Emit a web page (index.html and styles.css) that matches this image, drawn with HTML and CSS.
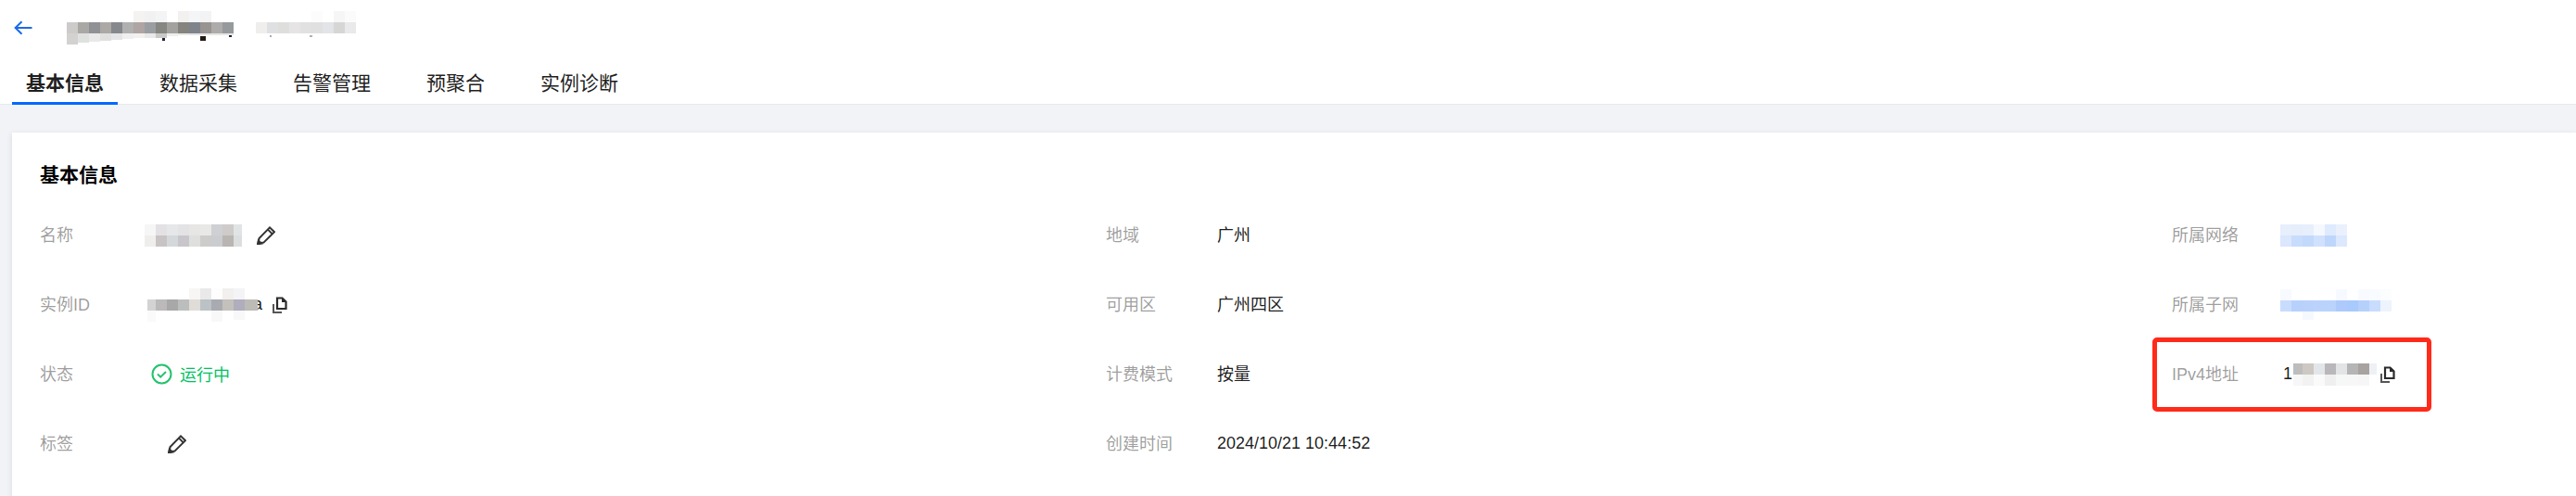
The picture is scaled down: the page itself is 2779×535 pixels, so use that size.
FILE: index.html
```html
<!DOCTYPE html>
<html lang="zh-CN">
<head>
<meta charset="utf-8">
<title>基本信息</title>
<link rel="stylesheet" href="styles.css">
</head>
<body>
<div class="page">
  <header class="head">
    <div class="titlebar">
      <svg class="back" width="20" height="16" viewBox="0 0 20 16" fill="none" stroke="#1a6ae8" stroke-width="2"><path d="M19.5 8H2M8.5 1.2 1.6 8l6.9 6.8"/></svg>
      <svg class="mosaic title-a" width="180" height="36" shape-rendering="crispEdges">
        <rect x="72" width="12" height="12" fill="#f5f3f2"/><rect x="84" width="12" height="12" fill="#f1f1f1"/><rect x="96" width="12" height="12" fill="#f3f4f6"/><rect x="120" width="12" height="12" fill="#f2f1ef"/><rect x="132" width="12" height="12" fill="#f3f5f7"/><rect x="144" width="12" height="12" fill="#f3f3f3"/>
        <rect y="12" width="12" height="12" fill="#cdcbc9"/><rect x="12" y="12" width="12" height="12" fill="#a9a8a5"/><rect x="24" y="12" width="12" height="12" fill="#8f9194"/><rect x="36" y="12" width="12" height="12" fill="#aca8a5"/><rect x="48" y="12" width="12" height="12" fill="#85888d"/><rect x="60" y="12" width="12" height="12" fill="#b0b0b0"/><rect x="72" y="12" width="12" height="12" fill="#afa5a4"/><rect x="84" y="12" width="12" height="12" fill="#9a9ea3"/><rect x="96" y="12" width="12" height="12" fill="#868683"/><rect x="108" y="12" width="12" height="12" fill="#a3a29f"/><rect x="120" y="12" width="12" height="12" fill="#86847f"/><rect x="132" y="12" width="12" height="12" fill="#7f838a"/><rect x="144" y="12" width="12" height="12" fill="#979491"/><rect x="156" y="12" width="12" height="12" fill="#adacaa"/><rect x="168" y="12" width="12" height="12" fill="#969a9d"/>
        <rect y="24" width="12" height="12" fill="#d4d2d1"/><rect x="12" y="24" width="12" height="10" fill="#dfe1df"/><rect x="24" y="24" width="12" height="9" fill="#e9e9e9"/><rect x="36" y="24" width="12" height="8" fill="#e0e0df"/><rect x="48" y="24" width="12" height="7" fill="#e4e5e7"/><rect x="60" y="24" width="12" height="6" fill="#efefef"/><rect x="72" y="24" width="12" height="5" fill="#f3f1f0"/><rect x="84" y="24" width="12" height="5" fill="#e9e9e9"/><rect x="96" y="24" width="12" height="5" fill="#c9c9c7"/><rect x="108" y="24" width="12" height="3" fill="#eeeeed"/><rect x="120" y="24" width="12" height="2" fill="#e8e8e7"/><rect x="132" y="24" width="12" height="2" fill="#e3e4e6"/><rect x="144" y="24" width="12" height="2" fill="#e5e5e4"/><rect x="156" y="24" width="12" height="2" fill="#e6e6e5"/><rect x="168" y="24" width="12" height="2" fill="#e6e7e8"/>
        <rect x="103" y="29" width="3" height="3" fill="#223"/><rect x="144" y="27" width="6" height="5" fill="#221a14"/><rect x="175" y="26" width="3" height="2" fill="#223"/>
      </svg>
      <svg class="mosaic title-b" width="108" height="36" shape-rendering="crispEdges">
        <rect x="60" width="12" height="12" fill="#fcfcfc"/><rect x="84" width="12" height="12" fill="#f6f6f6"/><rect x="96" width="12" height="12" fill="#fbfbfb"/>
        <rect y="12" width="12" height="12" fill="#efeeec"/><rect x="12" y="12" width="12" height="12" fill="#dfe0e2"/><rect x="24" y="12" width="12" height="12" fill="#dededd"/><rect x="36" y="12" width="12" height="12" fill="#e6e4e5"/><rect x="48" y="12" width="12" height="12" fill="#e1e1e1"/><rect x="60" y="12" width="12" height="12" fill="#e0e0e1"/><rect x="72" y="12" width="12" height="12" fill="#e3e4e8"/><rect x="84" y="12" width="12" height="12" fill="#d6d6d4"/><rect x="96" y="12" width="12" height="12" fill="#e9e9eb"/>
        <rect x="15" y="26" width="2" height="2" fill="#a9a9b5"/><rect x="58" y="26" width="3" height="2" fill="#b5b0aa"/>
      </svg>
    </div>
    <nav class="tabs">
      <a class="tab tab-active">基本信息</a>
      <a class="tab">数据采集</a>
      <a class="tab">告警管理</a>
      <a class="tab">预聚合</a>
      <a class="tab">实例诊断</a>
    </nav>
  </header>
  <main class="card">
    <h2 class="card-title">基本信息</h2>
    <div class="cols">
      <div class="col">
        <div class="row">
          <span class="label">名称</span>
          <div class="value">
            <svg class="mosaic shift-7" width="105" height="24" shape-rendering="crispEdges">
              <rect width="12" height="12" fill="#f6f6f6"/><rect x="12" width="12" height="12" fill="#e3e1e3"/><rect x="24" width="12" height="12" fill="#e5e7e9"/><rect x="36" width="12" height="12" fill="#e3e3e6"/><rect x="48" width="12" height="12" fill="#e7e6e5"/><rect x="60" width="12" height="12" fill="#e8e8e6"/><rect x="72" width="12" height="12" fill="#ced0d3"/><rect x="84" width="12" height="12" fill="#cecbca"/><rect x="96" width="9" height="12" fill="#e0e4e4"/>
              <rect y="12" width="12" height="12" fill="#efeeed"/><rect x="12" y="12" width="12" height="12" fill="#c8c4c5"/><rect x="24" y="12" width="12" height="12" fill="#d4d8db"/><rect x="36" y="12" width="12" height="12" fill="#c8c6cb"/><rect x="48" y="12" width="12" height="12" fill="#dfdfde"/><rect x="60" y="12" width="12" height="12" fill="#cdcccb"/><rect x="72" y="12" width="12" height="12" fill="#cbccd0"/><rect x="84" y="12" width="12" height="12" fill="#b9b5b2"/><rect x="96" y="12" width="9" height="12" fill="#dadedf"/>
            </svg>
            <svg class="icon pencil-after" width="20" height="21" viewBox="0 0 20 21" fill="none" stroke="#333" stroke-width="2"><path d="M1.4 19.6 2.6 14 14 2.4l5 4.8L7.4 18.6Z"/><path d="M12 4.600 16.800 9.400"/><path d="M1 20.400 1.800 16.500 5 19.600Z" fill="#333"/></svg>
          </div>
        </div>
        <div class="row">
          <span class="label">实例ID</span>
          <div class="value">
            <svg class="mosaic shift-4 over-a" width="119" height="36" shape-rendering="crispEdges">
              <rect x="45" width="12" height="12" fill="#f8f6f4"/><rect x="57" width="12" height="12" fill="#e9e9e9"/><rect x="69" width="12" height="12" fill="#fdfdfe"/><rect x="81" width="12" height="12" fill="#f2f0ee"/><rect x="93" width="12" height="12" fill="#f4f4f7"/>
              <rect y="12" width="9" height="12" fill="#d4d3d3"/><rect x="9" y="12" width="12" height="12" fill="#bbb9ba"/><rect x="21" y="12" width="12" height="12" fill="#a9a8a9"/><rect x="33" y="12" width="12" height="12" fill="#bcbebe"/><rect x="45" y="12" width="12" height="12" fill="#e0dcd8"/><rect x="57" y="12" width="12" height="12" fill="#bcc2c6"/><rect x="69" y="12" width="12" height="12" fill="#a9abb1"/><rect x="81" y="12" width="12" height="12" fill="#c4c0bc"/><rect x="93" y="12" width="12" height="12" fill="#b0aebc"/><rect x="105" y="12" width="14" height="12" fill="#bdbbb6"/>
              <rect y="24" width="9" height="12" fill="#fafafa"/><rect x="69" y="24" width="12" height="12" fill="#f8f8f8"/><rect x="93" y="24" width="12" height="10" fill="#f8f8f9"/>
            </svg>
            <span class="peek">a</span>
            <svg class="icon copy-a" width="16" height="18" viewBox="0 0 16 18" fill="none"><path d="M1 8v9h9" stroke="#555" stroke-width="2"/><path d="M5 1.500h5.500l4 4V13H5Z" stroke="#2b2b2b" stroke-width="2.200" fill="#fff"/><path d="M10 1.500v4.500h4.500Z" fill="#2b2b2b"/></svg>
          </div>
        </div>
        <div class="row">
          <span class="label">状态</span>
          <div class="value status">
            <svg class="icon" width="23" height="23" viewBox="0 0 23 23" fill="none" stroke="#25c26e" stroke-width="2"><circle cx="11.500" cy="11.500" r="10"/><path d="m7 11.500 3.200 3.200L16 9"/></svg>
            <span class="status-text">运行中</span>
          </div>
        </div>
        <div class="row">
          <span class="label">标签</span>
          <div class="value">
            <svg class="icon pencil-tag" width="20" height="21" viewBox="0 0 20 21" fill="none" stroke="#333" stroke-width="2"><path d="M1.4 19.6 2.6 14 14 2.4l5 4.8L7.4 18.6Z"/><path d="M12 4.600 16.800 9.400"/><path d="M1 20.400 1.800 16.500 5 19.600Z" fill="#333"/></svg>
          </div>
        </div>
      </div>
      <div class="col">
        <div class="row"><span class="label">地域</span><div class="value value-text">广州</div></div>
        <div class="row"><span class="label">可用区</span><div class="value value-text">广州四区</div></div>
        <div class="row"><span class="label">计费模式</span><div class="value value-text">按量</div></div>
        <div class="row"><span class="label">创建时间</span><div class="value value-date">2024/10/21 10:44:52</div></div>
      </div>
      <div class="col">
        <div class="row">
          <span class="label">所属网络</span>
          <div class="value">
            <svg class="mosaic shift-3" width="72" height="24" shape-rendering="crispEdges">
              <rect width="12" height="12" fill="#e7eefc"/><rect x="12" width="12" height="12" fill="#e6eefc"/><rect x="24" width="12" height="12" fill="#e7effc"/><rect x="36" width="12" height="12" fill="#f5f8fe"/><rect x="48" width="12" height="12" fill="#deeafd"/><rect x="60" width="12" height="12" fill="#eaf1fd"/>
              <rect y="12" width="12" height="12" fill="#dae7fd"/><rect x="12" y="12" width="12" height="12" fill="#c8dcfd"/><rect x="24" y="12" width="12" height="12" fill="#c3d9fc"/><rect x="36" y="12" width="12" height="12" fill="#d0e1fd"/><rect x="48" y="12" width="12" height="12" fill="#bfd6fc"/><rect x="60" y="12" width="12" height="12" fill="#dbe8fd"/>
            </svg>
          </div>
        </div>
        <div class="row">
          <span class="label">所属子网</span>
          <div class="value">
            <svg class="mosaic shift-3" width="120" height="33" shape-rendering="crispEdges">
              <rect width="12" height="12" fill="#f7faff"/><rect x="60" width="12" height="12" fill="#f6f9ff"/><rect x="84" width="12" height="12" fill="#f8faff"/><rect x="96" width="12" height="12" fill="#f8fbff"/><rect x="108" width="12" height="12" fill="#fcfdff"/>
              <rect y="12" width="12" height="12" fill="#c8dcfd"/><rect x="12" y="12" width="12" height="12" fill="#b7d1fc"/><rect x="24" y="12" width="12" height="12" fill="#b9d2fc"/><rect x="36" y="12" width="12" height="12" fill="#bbd3fc"/><rect x="48" y="12" width="12" height="12" fill="#b9d3fc"/><rect x="60" y="12" width="12" height="12" fill="#aec9fb"/><rect x="72" y="12" width="12" height="12" fill="#a8cafc"/><rect x="84" y="12" width="12" height="12" fill="#b6d0fc"/><rect x="96" y="12" width="12" height="12" fill="#c8dcfd"/><rect x="108" y="12" width="12" height="12" fill="#edf4fe"/>
              <rect x="24" y="24" width="12" height="9" fill="#f5f8ff"/>
            </svg>
          </div>
        </div>
        <div class="row row-marked">
          <span class="label">IPv4地址</span>
          <div class="value">
            <span class="ip-head">1</span>
            <svg class="mosaic" width="90" height="24" shape-rendering="crispEdges">
              <rect width="10" height="12" fill="#bdbdbd"/><rect x="10" width="12" height="12" fill="#cdc8c3"/><rect x="22" width="12" height="12" fill="#e3e6e9"/><rect x="34" width="12" height="12" fill="#b9b7b9"/><rect x="46" width="12" height="12" fill="#e2e4e6"/><rect x="58" width="12" height="12" fill="#b5b5b5"/><rect x="70" width="12" height="12" fill="#a8a3a0"/><rect x="82" width="8" height="12" fill="#edf1f5"/>
              <rect y="12" width="10" height="12" fill="#f7f7f7"/><rect x="10" y="12" width="12" height="12" fill="#f2f2f2"/><rect x="22" y="12" width="12" height="12" fill="#fafafa"/><rect x="34" y="12" width="12" height="12" fill="#efefef"/><rect x="46" y="12" width="12" height="12" fill="#f6f7f7"/><rect x="58" y="12" width="12" height="12" fill="#f7f7f7"/><rect x="70" y="12" width="12" height="12" fill="#f5f6f5"/>
            </svg>
            <svg class="icon copy-ip" width="16" height="18" viewBox="0 0 16 18" fill="none"><path d="M1 8v9h9" stroke="#555" stroke-width="2"/><path d="M5 1.500h5.500l4 4V13H5Z" stroke="#2b2b2b" stroke-width="2.200" fill="#fff"/><path d="M10 1.500v4.500h4.500Z" fill="#2b2b2b"/></svg>
          </div>
          <div class="marker"></div>
        </div>
      </div>
    </div>
  </main>
</div>
</body>
</html>
```

FILE: styles.css
```css
* { box-sizing: border-box; }
html, body { margin: 0; padding: 0; }
body {
  font-family: "Liberation Sans", "Noto Sans CJK SC", sans-serif;
  font-size: 18px;
  color: rgba(0, 0, 0, 0.9);
}
svg { display: block; flex: none; }
.page {
  height: 535px;
  overflow: hidden;
  background: #f1f3f7;
}
.head {
  background: #fff;
  border-bottom: 1px solid #e7e9ef;
  height: 113px;
}
.titlebar {
  display: flex;
  align-items: flex-start;
  height: 67px;
  padding: 12px 0 0 15px;
}
.back { margin-top: 10px; }
.title-a { margin-left: 37px; }
.title-b { margin-left: 24px; }
.tabs {
  display: flex;
  gap: 30px;
  padding-left: 13px;
}
.tab {
  height: 46px;
  padding: 2px 15px 0;
  font-size: 21px;
  line-height: 41px;
  border-bottom: 3px solid transparent;
}
.tab-active {
  font-weight: 700;
  border-bottom-color: #0069ff;
}
.card {
  margin: 30px 0 0 13px;
  height: 400px;
  padding: 31px 0 0 30px;
  background: #fff;
  box-shadow: 0 2px 6px rgba(40, 50, 80, 0.14);
}
.card-title {
  margin: 0 0 12px;
  font-size: 21px;
  line-height: 30px;
  font-weight: 700;
  color: #000;
}
.cols {
  display: grid;
  grid-template-columns: 1150px 1150px 1fr;
}
.row {
  position: relative;
  display: flex;
  align-items: center;
  height: 75px;
}
.label {
  flex: none;
  width: 120px;
  padding-bottom: 3px;
  color: rgba(0, 0, 0, 0.4);
}
.value {
  display: flex;
  align-items: center;
}
.value-text { padding-bottom: 3px; }
.value-date { padding-bottom: 1px; }
.shift-7 { margin-left: -7px; }
.shift-4 { margin-left: -4px; }
.shift-3 { margin-left: -3px; }
.pencil-after { margin-left: 16px; }
.over-a { position: relative; z-index: 1; }
.peek { margin-left: -10px; width: 10px; position: relative; left: 5px; }
.copy-a { margin-left: 16px; }
.status { color: #00c261; }
.status-text { margin-left: 8px; padding-bottom: 2px; }
.pencil-tag { margin-left: 18px; }
.ip-head { width: 11px; }
.copy-ip { margin-left: 4px; }
.marker {
  position: absolute;
  left: -21px;
  top: -2px;
  width: 301px;
  height: 80px;
  border: 5px solid #ff2a1a;
  border-radius: 5px;
}
```
